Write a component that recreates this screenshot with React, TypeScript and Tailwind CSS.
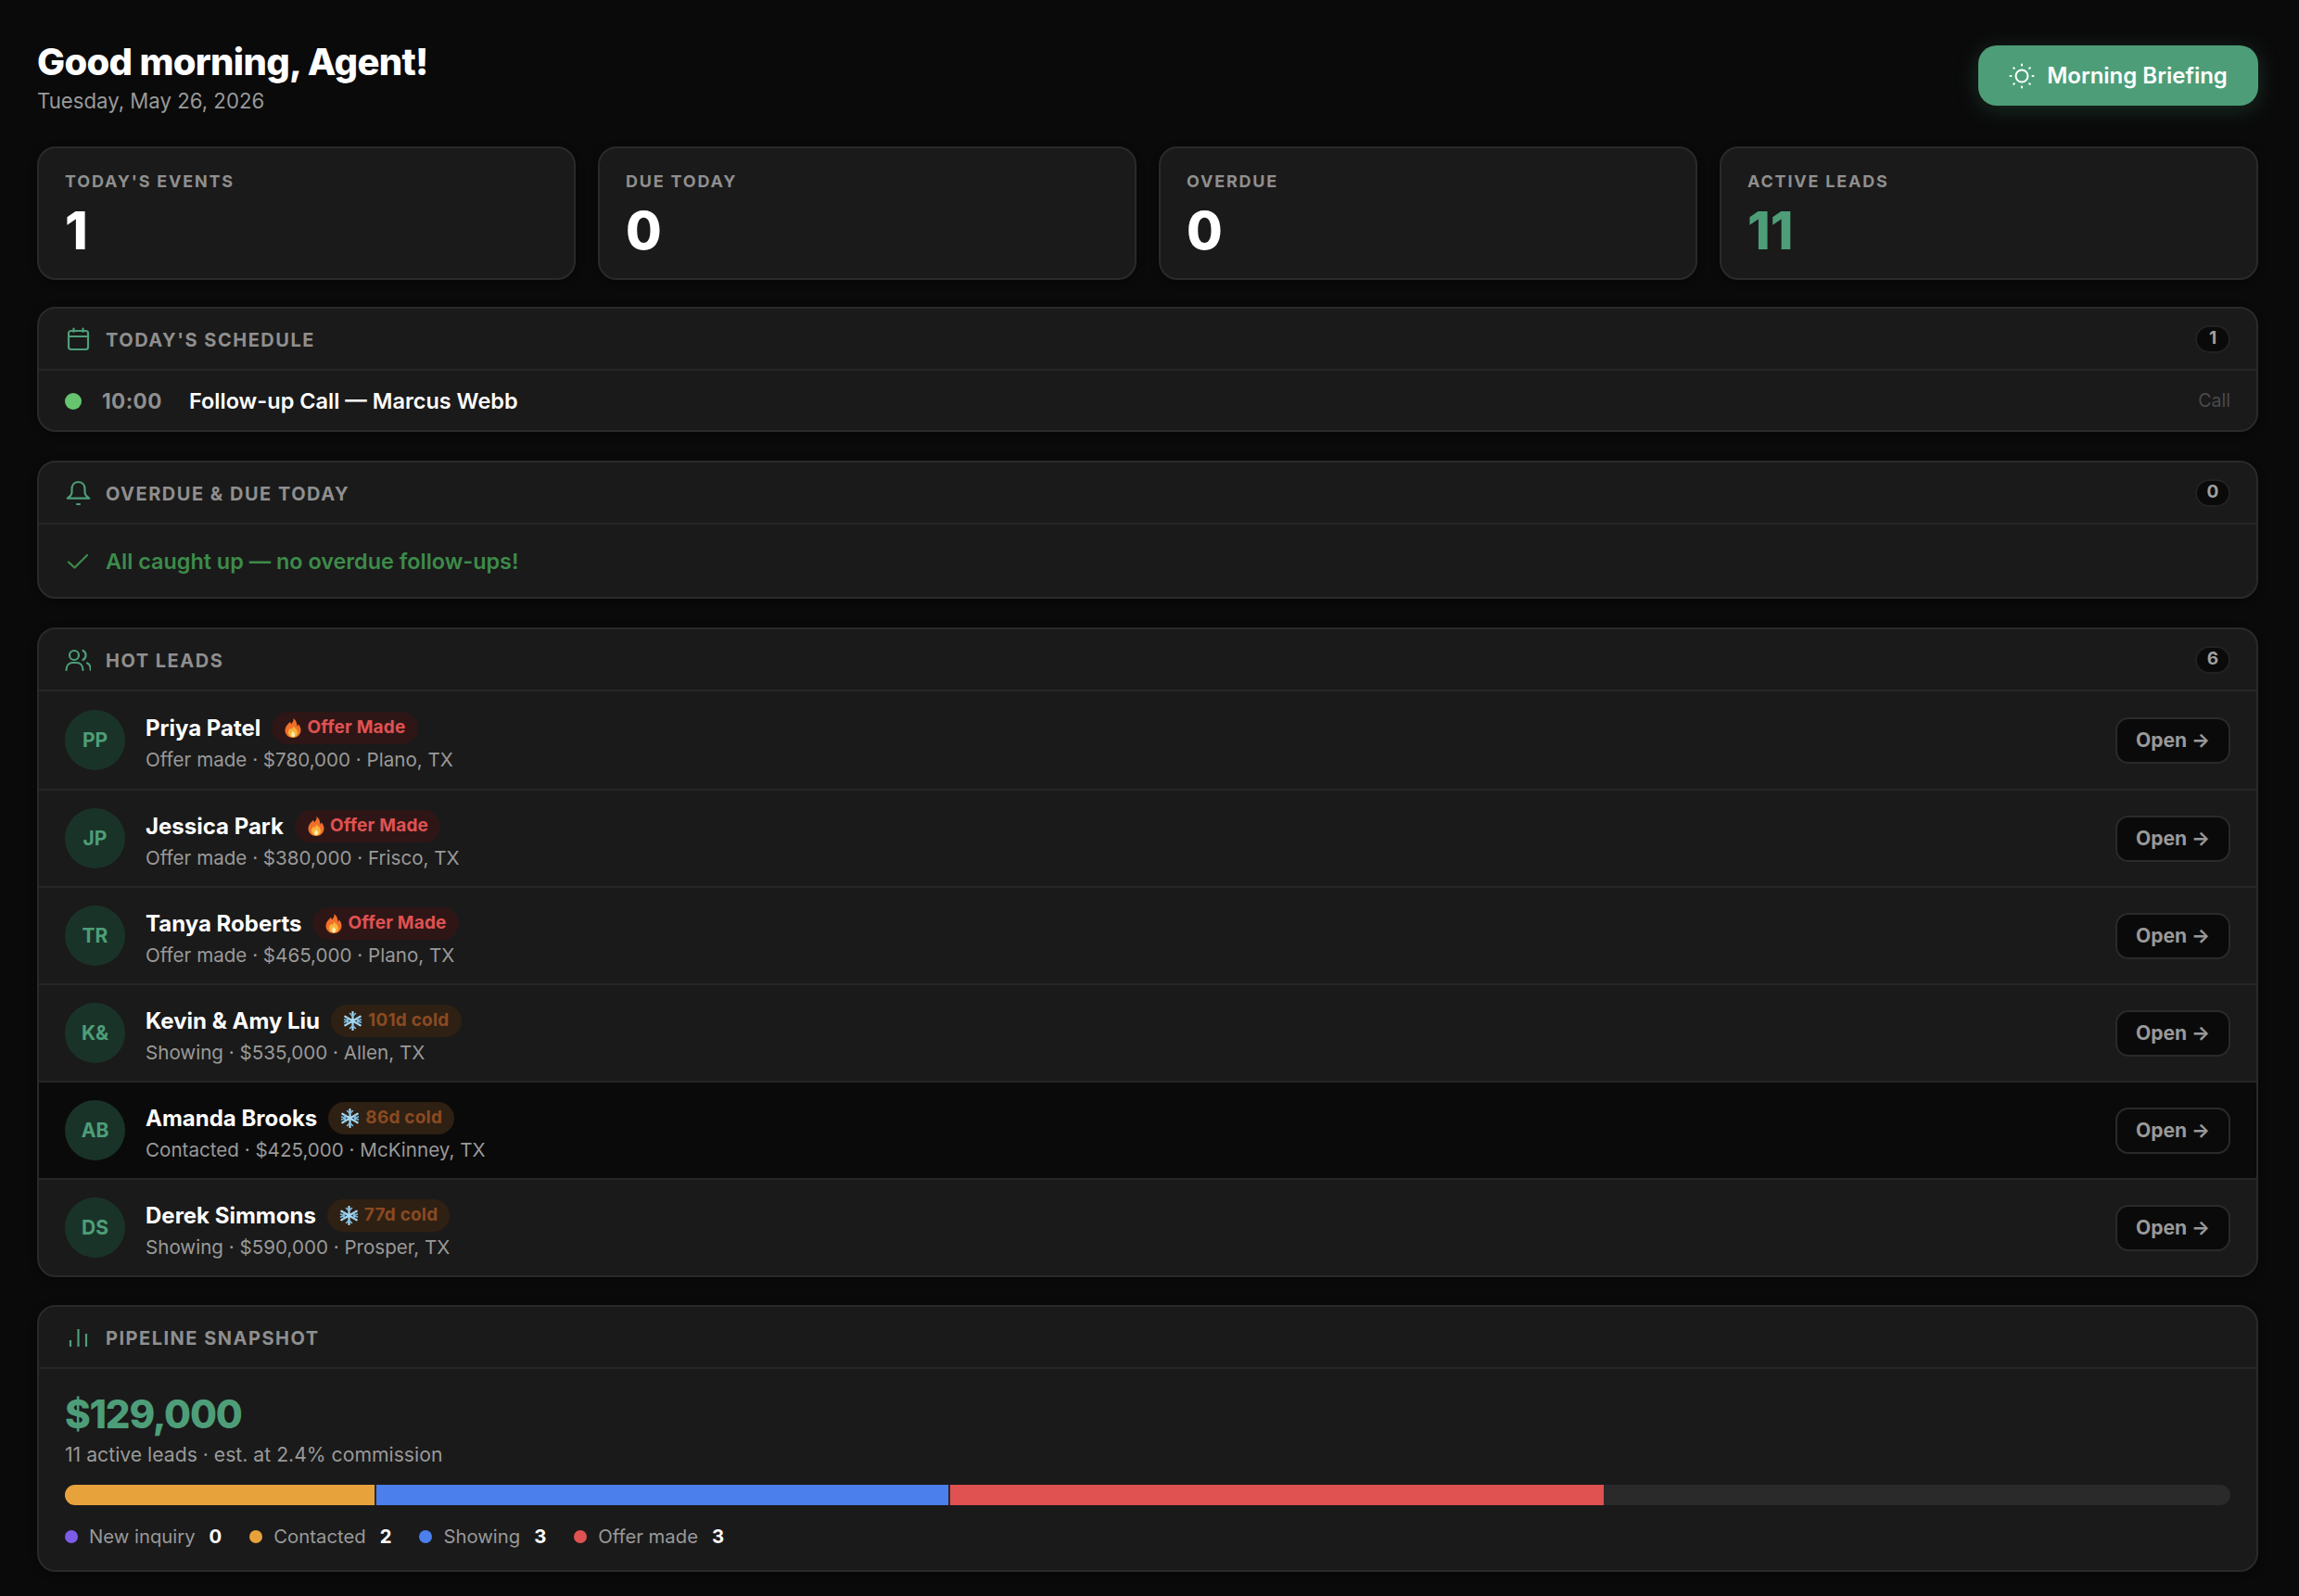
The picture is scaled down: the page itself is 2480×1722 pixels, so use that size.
import type { ReactNode } from 'react'

interface Lead {
  initials: string
  name: string
  detail: string
  badge: string
  hot: boolean
  active?: boolean
}

const stats = [
  { label: "TODAY'S EVENTS", value: '1', color: 'text-white' },
  { label: 'DUE TODAY', value: '0', color: 'text-white' },
  { label: 'OVERDUE', value: '0', color: 'text-white' },
  { label: 'ACTIVE LEADS', value: '11', color: 'text-[#4d9e78]' },
]

const leads: Lead[] = [
  { initials: 'PP', name: 'Priya Patel', detail: 'Offer made · $780,000 · Plano, TX', badge: 'Offer Made', hot: true },
  { initials: 'JP', name: 'Jessica Park', detail: 'Offer made · $380,000 · Frisco, TX', badge: 'Offer Made', hot: true },
  { initials: 'TR', name: 'Tanya Roberts', detail: 'Offer made · $465,000 · Plano, TX', badge: 'Offer Made', hot: true },
  { initials: 'K&', name: 'Kevin & Amy Liu', detail: 'Showing · $535,000 · Allen, TX', badge: '101d cold', hot: false },
  { initials: 'AB', name: 'Amanda Brooks', detail: 'Contacted · $425,000 · McKinney, TX', badge: '86d cold', hot: false, active: true },
  { initials: 'DS', name: 'Derek Simmons', detail: 'Showing · $590,000 · Prosper, TX', badge: '77d cold', hot: false },
]

const legend = [
  { label: 'New inquiry', value: 0, color: 'bg-[#7c5ce8]' },
  { label: 'Contacted', value: 2, color: 'bg-[#e8a23c]' },
  { label: 'Showing', value: 3, color: 'bg-[#4a7fec]' },
  { label: 'Offer made', value: 3, color: 'bg-[#e05252]' },
]

function SectionIcon({ children }: { children: ReactNode }) {
  return (
    <svg className="w-7 h-7 shrink-0 text-[#4d9e78]" viewBox="0 0 28 28" fill="none" stroke="currentColor" strokeWidth={2.2} strokeLinecap="round" strokeLinejoin="round">
      {children}
    </svg>
  )
}

function Flame() {
  return (
    <svg className="w-[18px] h-[21px] shrink-0" viewBox="0 0 18 21">
      <path fill="#f0702a" d="M9.5 0c.6 3-1 4.6-2.4 6.2C6.6 5.400 6.300 4.600 6.200 3.800 3 6.300.5 9.300.5 13c0 4.700 3.800 8 8.500 8s8.500-3.300 8.500-8c0-2.700-1.200-5-2.800-6.700-.1 1-.5 1.800-1.200 2.400C13.500 5.300 12.300 1.800 9.500 0z" />
      <path fill="#f9b53a" d="M9.200 8.500c.2 1.700-1 2.500-2 3.700-.5-.5-.8-1-.9-1.500C4.800 12 4 13.600 4 15.300 4 18.300 6.200 20.500 9 20.500s5-2.200 5-5c0-3-2.500-4.600-4.800-7z" />
      <path fill="#fdeeb0" d="M9 14c-.2 1-1.900 1.700-1.900 3.500 0 1.500.9 2.800 2 2.800s2-1.200 2-2.700c0-1.600-1.300-2.400-2.100-3.600z" />
    </svg>
  )
}

function Snowflake() {
  return (
    <svg className="w-[21px] h-[21px] shrink-0" viewBox="0 0 21 21" fill="none" stroke="#a5d8f3" strokeWidth={2.2} strokeLinecap="round">
      <path d="M10.500 1v19M2.300 5.750l16.400 9.500M2.300 15.250l16.400-9.500" />
      <path strokeWidth={1.5} stroke="#7fbfe6" d="M7.500 2.500l3 3 3-3M7.500 18.500l3-3 3 3M1.500 9l4 1.500-1 3.500M19.500 9l-4 1.500 1 3.500M1.500 12l4-1.500-1-3.500M19.500 12l-4-1.500 1-3.500" />
    </svg>
  )
}

function Section({
  icon,
  title,
  count,
  className = '',
  children,
}: {
  icon: ReactNode
  title: string
  count?: number
  className?: string
  children: ReactNode
}) {
  return (
    <section className={`rounded-[20px] border-2 border-[#2a2a2a] bg-[#1a1a1a] overflow-hidden shadow-[0_2px_8px_rgba(0,0,0,0.4)] ${className}`}>
      <header className="h-[67px] flex items-center gap-4 pl-7 pr-[28px] border-b-2 border-[#262626]">
        <SectionIcon>{icon}</SectionIcon>
        <h2 className="flex-1 pt-0.5 text-[20px] leading-none font-bold tracking-[1.5px] text-[#8f8f8f]">{title}</h2>
        {count !== undefined && (
          <span className="min-w-[38px] h-[30px] flex items-center justify-center rounded-full border-2 border-[#222222] bg-[#0a0a0a] text-[19px] font-bold text-[#a0a0a0]">
            {count}
          </span>
        )}
      </header>
      {children}
    </section>
  )
}

function LeadRow({ lead }: { lead: Lead }) {
  return (
    <div className={`h-[105px] flex items-center gap-[22px] pl-7 pr-[28px] border-t-2 border-[#262626] first-of-type:border-t-0 ${lead.active ? 'bg-[#0a0a0a]' : ''}`}>
      <div className="w-[65px] h-[65px] shrink-0 rounded-full bg-[#1a3329] flex items-center justify-center text-[21px] font-bold text-[#4d9e78]">
        {lead.initials}
      </div>
      <div className="flex-1 min-w-0 pt-[6px]">
        <div className="flex items-center gap-3">
          <span className="text-[24px] leading-[35px] font-bold text-white">{lead.name}</span>
          {lead.hot ? (
            <span className="h-[35px] flex items-center gap-1.5 pl-[14px] pr-[13px] rounded-full bg-[#2e1616] text-[19px] font-bold tracking-[0.2px] text-[#e05252]">
              <Flame />
              {lead.badge}
            </span>
          ) : (
            <span className="h-[35px] flex items-center gap-1.5 pl-[13px] pr-[13px] rounded-full bg-[#2e2013] text-[19px] font-bold tracking-[0.2px] text-[#8a4a22]">
              <Snowflake />
              {lead.badge}
            </span>
          )}
        </div>
        <p className="mt-0.5 text-[20.6px] leading-[30px] text-[#999999]">{lead.detail}</p>
      </div>
      <button className="w-[124px] h-[50px] shrink-0 rounded-[14px] border-2 border-[#2a2a2a] bg-[#0a0a0a] text-[21px] font-bold text-[#999999]">
        Open →
      </button>
    </div>
  )
}

export default function App() {
  return (
    <div className="min-h-screen bg-[#0a0a0a] pl-10 pr-11 pt-10 pb-[27px] font-['Inter',sans-serif]">
      {/* Greeting */}
      <div className="flex items-start justify-between mb-[34px]">
        <div>
          <h1 className="pt-0.5 h-[50px] text-[40px] leading-[50px] font-extrabold tracking-[-0.7px] text-white">Good morning, Agent!</h1>
          <p className="mt-1 text-[22.2px] leading-[30px] text-[#999999]">Tuesday, May 26, 2026</p>
        </div>
        <button className="mt-[9px] w-[302px] h-[65px] flex items-center justify-center gap-[13px] rounded-[20px] bg-[#4d9e78] text-[24px] font-semibold text-white shadow-[0_4px_24px_rgba(77,158,120,0.25)]">
          <svg className="w-7 h-7 shrink-0" viewBox="0 0 28 28" fill="none" stroke="currentColor" strokeWidth={2} strokeLinecap="round">
            <circle cx="14" cy="14" r="6.500" />
            <path d="M14 1.500v1M14 25.500v1M1.500 14h1M25.500 14h1M5.200 5.200l.6.6M22.200 22.200l.6.6M5.200 22.800l.6-.6M22.200 5.800l.6-.6" />
          </svg>
          Morning Briefing
        </button>
      </div>

      {/* Stat cards */}
      <div className="grid grid-cols-4 gap-6 mb-[29px]">
        {stats.map((stat) => (
          <div key={stat.label} className="h-[144px] rounded-[20px] border-2 border-[#2a2a2a] bg-[#1a1a1a] px-7 pt-[25px] shadow-[0_2px_8px_rgba(0,0,0,0.4)]">
            <p className="text-[18px] leading-[22px] font-bold tracking-[1.8px] text-[#8f8f8f]">{stat.label}</p>
            <p className={`mt-[14px] text-[56px] leading-none font-extrabold ${stat.color}`}>{stat.value}</p>
          </div>
        ))}
      </div>

      <div className="flex flex-col gap-[31px]">
        <Section
          title="TODAY'S SCHEDULE"
          count={1}
          icon={
            <>
              <rect x="4" y="5" width="21" height="20" rx="2.500" />
              <path d="M4 11h21M9.500 2.500V6M19.500 2.500V6" />
            </>
          }
        >
          <div className="h-[64px] pt-0.5 flex items-center pl-7 pr-[28px]">
            <span className="w-[18px] h-[18px] rounded-full bg-[#66c56e]" />
            <span className="ml-[22px] w-[94px] text-[22.5px] font-bold tracking-[0.4px] text-[#8f8f8f]">10:00</span>
            <span className="flex-1 text-[23.5px] font-semibold text-white">Follow-up Call — Marcus Webb</span>
            <span className="text-[19.5px] text-[#4a4a4a]">Call</span>
          </div>
        </Section>

        <Section
          title="OVERDUE & DUE TODAY"
          count={0}
          icon={
            <>
              <path d="M14.500 2c-4.800 0-7 3.600-7 8v3c0 3-2.500 5.200-4.800 6.700h23.600C24 18.200 21.500 16 21.500 13v-3c0-4.400-2.200-8-7-8z" />
              <path d="M13 26h3" />
            </>
          }
        >
          <div className="h-[78px] pt-0.5 flex items-center gap-4 pl-7 pr-[28px] text-[23.4px] font-semibold text-[#3d8b4a]">
            <svg className="w-7 h-7 shrink-0" viewBox="0 0 28 28" fill="none" stroke="currentColor" strokeWidth={2.200} strokeLinecap="round" strokeLinejoin="round">
              <path d="M4 14.500l6.500 6L24 7" />
            </svg>
            All caught up — no overdue follow-ups!
          </div>
        </Section>

        <Section
          title="HOT LEADS"
          count={6}
          icon={
            <>
              <circle cx="10" cy="9" r="5" />
              <path d="M19.500 4c2 1 3 3 3 5s-1 4-3 5" />
              <path d="M1.500 25c0-5 3-8 7-8h4c4 0 7 3 7 8" />
              <path d="M24 17.500c2.500 1 3.800 4 3.800 7.500" />
            </>
          }
        >
          {leads.map((lead) => (
            <LeadRow key={lead.initials} lead={lead} />
          ))}
        </Section>

        <Section
          title="PIPELINE SNAPSHOT"
          className="-mt-px"
          icon={<path strokeLinecap="butt" d="M6 24v-7M14.500 24V5M23 24V10" />}
        >
          <div className="px-7 pt-[25px] pb-[21px]">
            <p className="text-[42px] leading-[48px] font-extrabold tracking-[-1.2px] text-[#4d9e78]">$129,000</p>
            <p className="mt-1 text-[21.2px] leading-[30px] text-[#999999]">11 active leads · est. at 2.4% commission</p>

            {/* Stage bar */}
            <div className="mt-[18px] h-[22px] flex gap-0.5 rounded-[11px] overflow-hidden bg-[#2a2a2a]">
              <div className="w-[334px] bg-[#e8a23c]" />
              <div className="w-[617px] bg-[#4a7fec]" />
              <div className="w-[705px] bg-[#e05252]" />
            </div>

            <div className="mt-[19px] flex items-center gap-[30px] text-[20.3px] leading-[30px]">
              {legend.map((item) => (
                <div key={item.label} className="flex items-center">
                  <span className={`w-[14px] h-[14px] rounded-full ${item.color}`} />
                  <span className="ml-3 text-[#999999]">{item.label}</span>
                  <span className="ml-[15px] font-bold text-white">{item.value}</span>
                </div>
              ))}
            </div>
          </div>
        </Section>
      </div>
    </div>
  )
}
